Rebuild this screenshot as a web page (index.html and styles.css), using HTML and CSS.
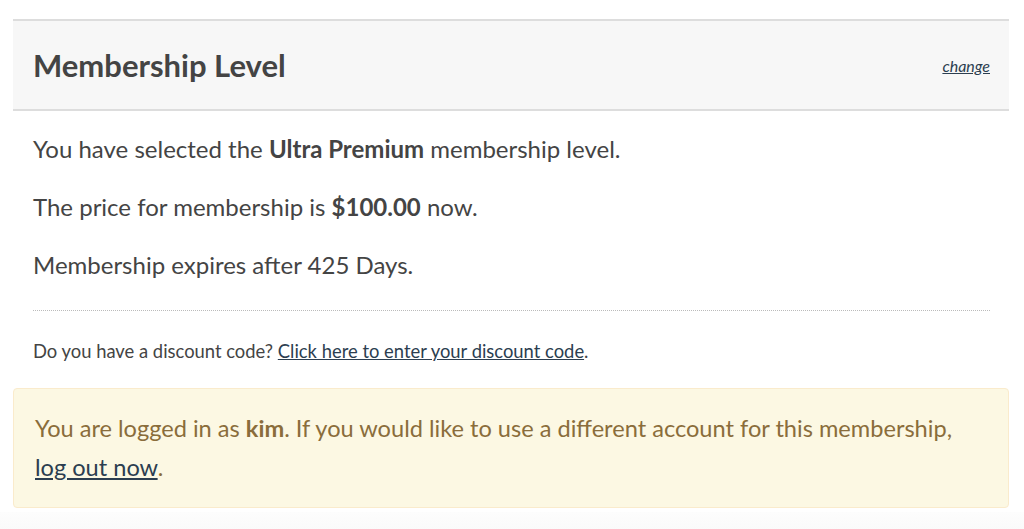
FILE: index.html
```html
<!DOCTYPE html>
<html>
<head>
<meta charset="utf-8">
<link rel="stylesheet" href="styles.css">
</head>
<body>
<div class="wrap">
  <section class="level">
    <div class="level-head">
      <h2 class="level-title">Membership Level</h2>
      <a class="change" href="#">change</a>
    </div>
    <div class="level-body">
      <p class="line">You have selected the <strong>Ultra Premium</strong> membership level.</p>
      <p class="line">The price for membership is <strong>$100.00</strong> now.</p>
      <p class="line">Membership expires after 425 Days.</p>
      <hr class="sep">
      <p class="discount">Do you have a discount code? <a href="#">Click here to enter your discount code</a>.</p>
    </div>
  </section>
  <div class="alert">You are logged in as <strong>kim</strong>. If you would like to use a different account for this membership, <a href="#">log out now</a>.</div>
  <div class="next"></div>
</div>
</body>
</html>
```

FILE: styles.css
```css
html, body {
  margin: 0;
  padding: 0;
  background: #fff;
}
body {
  font-family: Lato, "Open Sans", sans-serif;
  color: #444;
}
a {
  color: #2c3e50;
  text-decoration: underline;
}
.wrap {
  padding: 19px 15px 0 13px;
}
.level-head {
  display: flex;
  align-items: center;
  justify-content: space-between;
  background: #f7f7f7;
  border-top: 2px solid #ddd;
  border-bottom: 2px solid #ddd;
  height: 92px;
  box-sizing: border-box;
  padding: 0 19px 0 20px;
}
.level-title {
  margin: 0;
  font-size: 31px;
  font-weight: 700;
  color: #444;
}
.change {
  font-size: 16px;
  font-style: italic;
}
.level-body {
  display: flex;
  flex-direction: column;
  padding: 23px 19px 0 20px;
}
.line {
  margin: 0 0 28px;
  font-size: 24px;
  line-height: 30px;
}
.sep {
  width: 100%;
  border: 0;
  border-top: 1px dotted #bbb;
  margin: 2px 0 0;
}
.discount {
  margin: 28px 0 0;
  font-size: 18.4px;
  line-height: 24px;
}
.alert {
  margin-top: 25px;
  background: #fcf8e3;
  border: 1px solid #faebcc;
  border-radius: 4px;
  color: #8a6d3b;
  font-size: 23.6px;
  line-height: 39px;
  padding: 20px 21px 20px 21px;
}
.alert a {
  color: #2c3e50;
}
.next {
  height: 30px;
  margin: 4px -15px 0 -13px;
  background: linear-gradient(#fdfdfd, #f8f8f8);
}
```
